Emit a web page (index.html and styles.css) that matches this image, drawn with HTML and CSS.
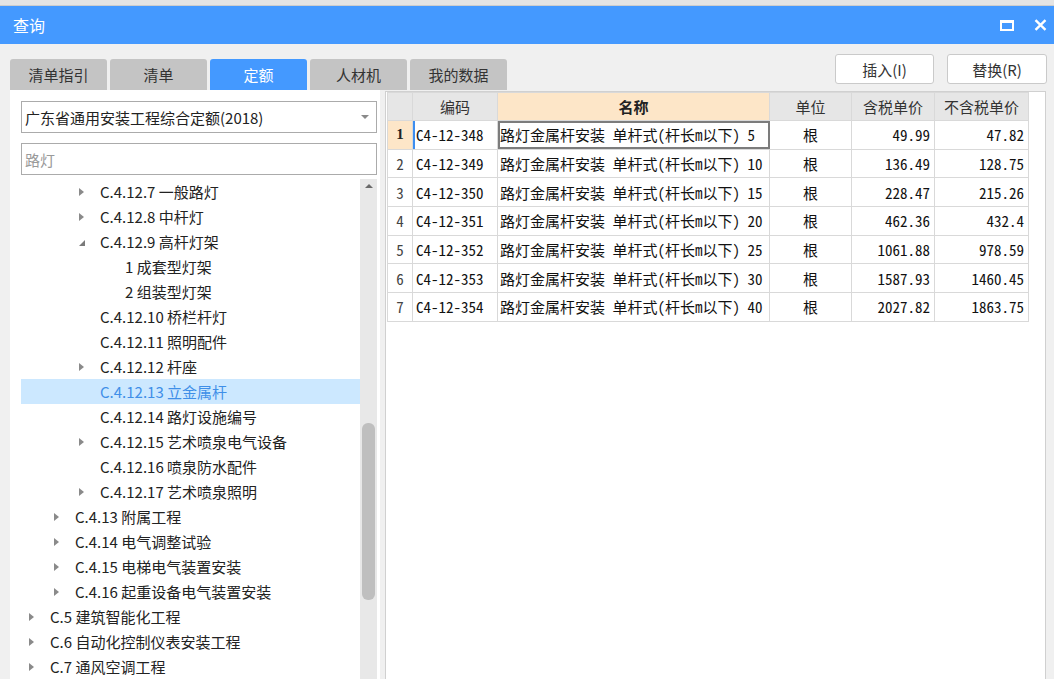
FILE: index.html
```html
<!DOCTYPE html>
<html lang="zh-CN">
<head>
<meta charset="utf-8">
<title>查询</title>
<link rel="stylesheet" href="styles.css">
</head>
<body>
<div class="topstrip"></div>
<div class="titlebar">
  <div class="title">查询</div>
  <div class="winbtns">
    <svg class="wmax" width="14" height="11" viewBox="0 0 14 11"><rect x="1" y="1.5" width="12" height="8.5" fill="none" stroke="#fff" stroke-width="2"/><rect x="0" y="0" width="14" height="3" fill="#fff"/></svg>
    <svg class="wclose" width="13" height="12" viewBox="0 0 13 12"><path d="M1.5 1.2 L11.5 10.8 M11.5 1.2 L1.5 10.8" stroke="#fff" stroke-width="2.4" fill="none"/></svg>
  </div>
</div>
<div class="toolbar">
  <div class="tabs">
    <div class="tab">清单指引</div>
    <div class="tab">清单</div>
    <div class="tab active">定额</div>
    <div class="tab">人材机</div>
    <div class="tab">我的数据</div>
  </div>
  <div class="actions">
    <div class="btn">插入(I)</div>
    <div class="btn wide">替换(R)</div>
  </div>
</div>
<div class="content">
  <div class="left">
    <div class="select"><span class="seltext">广东省通用安装工程综合定额(2018)</span><span class="caret"></span></div>
    <div class="search">路灯</div>
    <div class="treewrap">
      <div class="tree">
        <div class="node l3"><span class="tw"><i class="arr"></i></span>C.4.12.7 一般路灯</div>
        <div class="node l3"><span class="tw"><i class="arr"></i></span>C.4.12.8 中杆灯</div>
        <div class="node l3"><span class="tw"><i class="open"></i></span>C.4.12.9 高杆灯架</div>
        <div class="node l4"><span class="tw"></span>1 成套型灯架</div>
        <div class="node l4"><span class="tw"></span>2 组装型灯架</div>
        <div class="node l3"><span class="tw"></span>C.4.12.10 桥栏杆灯</div>
        <div class="node l3"><span class="tw"></span>C.4.12.11 照明配件</div>
        <div class="node l3"><span class="tw"><i class="arr"></i></span>C.4.12.12 杆座</div>
        <div class="node l3 sel"><span class="tw"></span>C.4.12.13 立金属杆</div>
        <div class="node l3"><span class="tw"></span>C.4.12.14 路灯设施编号</div>
        <div class="node l3"><span class="tw"><i class="arr"></i></span>C.4.12.15 艺术喷泉电气设备</div>
        <div class="node l3"><span class="tw"></span>C.4.12.16 喷泉防水配件</div>
        <div class="node l3"><span class="tw"><i class="arr"></i></span>C.4.12.17 艺术喷泉照明</div>
        <div class="node l2"><span class="tw"><i class="arr"></i></span>C.4.13 附属工程</div>
        <div class="node l2"><span class="tw"><i class="arr"></i></span>C.4.14 电气调整试验</div>
        <div class="node l2"><span class="tw"><i class="arr"></i></span>C.4.15 电梯电气装置安装</div>
        <div class="node l2"><span class="tw"><i class="arr"></i></span>C.4.16 起重设备电气装置安装</div>
        <div class="node l1"><span class="tw"><i class="arr"></i></span>C.5 建筑智能化工程</div>
        <div class="node l1"><span class="tw"><i class="arr"></i></span>C.6 自动化控制仪表安装工程</div>
        <div class="node l1"><span class="tw"><i class="arr"></i></span>C.7 通风空调工程</div>
      </div>
      <div class="vscroll">
        <div class="up"></div>
        <div class="thumb"></div>
      </div>
    </div>
  </div>
  <div class="right">
    <table class="grid">
      <colgroup>
        <col class="c-no"><col class="c-code"><col class="c-name"><col class="c-unit"><col class="c-p1"><col class="c-p2">
      </colgroup>
      <thead>
        <tr><th class="corner"></th><th>编码</th><th class="hname">名称</th><th>单位</th><th>含税单价</th><th>不含税单价</th></tr>
      </thead>
      <tbody>
        <tr class="cur"><td class="no">1</td><td class="code">C4-12-348</td><td class="name focus">路灯金属杆安装 单杆式(杆长m以下) 5</td><td class="unit">根</td><td class="num">49.99</td><td class="num">47.82</td></tr>
        <tr><td class="no">2</td><td class="code">C4-12-349</td><td class="name">路灯金属杆安装 单杆式(杆长m以下) 10</td><td class="unit">根</td><td class="num">136.49</td><td class="num">128.75</td></tr>
        <tr><td class="no">3</td><td class="code">C4-12-350</td><td class="name">路灯金属杆安装 单杆式(杆长m以下) 15</td><td class="unit">根</td><td class="num">228.47</td><td class="num">215.26</td></tr>
        <tr><td class="no">4</td><td class="code">C4-12-351</td><td class="name">路灯金属杆安装 单杆式(杆长m以下) 20</td><td class="unit">根</td><td class="num">462.36</td><td class="num">432.4</td></tr>
        <tr><td class="no">5</td><td class="code">C4-12-352</td><td class="name">路灯金属杆安装 单杆式(杆长m以下) 25</td><td class="unit">根</td><td class="num">1061.88</td><td class="num">978.59</td></tr>
        <tr><td class="no">6</td><td class="code">C4-12-353</td><td class="name">路灯金属杆安装 单杆式(杆长m以下) 30</td><td class="unit">根</td><td class="num">1587.93</td><td class="num">1460.45</td></tr>
        <tr><td class="no">7</td><td class="code">C4-12-354</td><td class="name">路灯金属杆安装 单杆式(杆长m以下) 40</td><td class="unit">根</td><td class="num">2027.82</td><td class="num">1863.75</td></tr>
      </tbody>
    </table>
  </div>
</div>
</body>
</html>
```
FILE: styles.css
```css
* { box-sizing: border-box; }
html, body { margin: 0; padding: 0; }
body {
  width: 1054px;
  height: 679px;
  overflow: hidden;
  background: #f0f0f0;
  font-family: "Noto Sans CJK SC", "Noto Sans", sans-serif;
  color: #222;
}
.topstrip {
  height: 6px;
  background: #e4e4e4;
  border-bottom: 1px solid #cdcdcd;
}
.titlebar {
  height: 38px;
  background: #4499ff;
  display: flex;
  align-items: center;
  padding: 0 7px 0 13px;
  color: #fff;
  font-size: 16px;
}
.title { flex: 1; }
.winbtns { display: flex; align-items: center; }
.wmax { display: block; margin-right: 20px; }
.wclose { display: block; }

.toolbar {
  height: 46px;
  display: flex;
  padding: 0 7px 0 10px;
}
.tabs {
  display: flex;
  gap: 3px;
  align-self: flex-end;
}
.tab {
  width: 97px;
  height: 31px;
  background: #c4c4c4;
  border-radius: 3px 3px 0 0;
  display: flex;
  align-items: center;
  justify-content: center;
  font-size: 15px;
  color: #333;
}
.tab.active { background: #4499ff; color: #fff; }
.actions {
  margin-left: auto;
  display: flex;
  gap: 13px;
  padding-top: 10px;
}
.btn {
  width: 99px;
  height: 30px;
  background: #fff;
  border: 1px solid #cacaca;
  border-radius: 3px;
  display: flex;
  align-items: center;
  justify-content: center;
  font-size: 15px;
  color: #333;
}
.btn.wide { width: 100px; }

.content {
  display: flex;
  height: 589px;
}
.left {
  width: 370px;
  margin-left: 10px;
  background: #fff;
  padding: 11px 3px 0 11px;
  display: flex;
  flex-direction: column;
}
.select {
  height: 32px;
  border: 1px solid #ababab;
  display: flex;
  align-items: center;
  padding: 0 7px 0 3px;
  font-size: 15px;
  color: #222;
}
.seltext { flex: 1; }
.caret {
  width: 0; height: 0;
  border-left: 4px solid transparent;
  border-right: 4px solid transparent;
  border-top: 4px solid #8a8a8a;
}
.search {
  margin-top: 10px;
  height: 32px;
  border: 1px solid #ababab;
  display: flex;
  align-items: center;
  padding-left: 3px;
  font-size: 15px;
  color: #9a9a9a;
}
.treewrap {
  margin-top: 4px;
  flex: 1;
  display: flex;
  min-height: 0;
}
.tree { flex: 1; }
.node {
  height: 25px;
  display: flex;
  align-items: center;
  font-size: 15px;
  color: #222;
  white-space: nowrap;
}
.node.l1 { padding-left: 4px; }
.node.l2 { padding-left: 29px; }
.node.l3 { padding-left: 54px; }
.node.l4 { padding-left: 79px; }
.node.sel { background: #cce8ff; color: #3f8fe8; }
.tw {
  width: 25px;
  height: 25px;
  display: flex;
  align-items: center;
  padding-left: 4px;
}
.arr {
  width: 0; height: 0;
  border-left: 5px solid #8a8a8a;
  border-top: 4px solid transparent;
  border-bottom: 4px solid transparent;
}
.open {
  width: 0; height: 0;
  margin-top: 2px;
  border-bottom: 6px solid #7a7a7a;
  border-left: 6px solid transparent;
}
.vscroll {
  width: 17px;
  background: #e8e8e8;
  position: relative;
}
.up {
  margin: 5px auto 0;
  width: 0; height: 0;
  border-left: 4px solid transparent;
  border-right: 4px solid transparent;
  border-bottom: 4px solid #6a6a6a;
}
.thumb {
  position: absolute;
  left: 2px;
  top: 244px;
  width: 13px;
  height: 177px;
  background: #bfbfbf;
  border-radius: 6px;
}

.right {
  width: 661px;
  margin-left: 5px;
  margin-top: 1px;
  background: #fff;
  border: 1px solid #d0d0d0;
  border-bottom: none;
  padding-left: 1px;
}
.grid {
  border-collapse: collapse;
  table-layout: fixed;
  width: 641px;
}
.c-no { width: 25px; }
.c-code { width: 85px; }
.c-name { width: 272px; }
.c-unit { width: 82px; }
.c-p1 { width: 83px; }
.c-p2 { width: 94px; }
.grid th, .grid td {
  border: 1px solid #d9d9d9;
  padding: 0;
  white-space: nowrap;
  overflow: hidden;
}
.grid th {
  height: 28px;
  background: #e6e6e6;
  font-weight: normal;
  font-size: 15px;
  color: #333;
}
.grid th.hname { background: #fde6c8; font-weight: bold; color: #222; }
.grid td {
  height: 28.7px;
  font-family: "Noto Sans Mono CJK SC", "Noto Sans CJK SC", "Liberation Mono", monospace;
  font-size: 15px;
  color: #111;
}
.grid td.no { text-align: center; color: #444; background: #fff; }
.grid tr.cur td.no { background: #fde6c8; font-weight: bold; color: #222; font-family: "Liberation Serif", serif; }
.grid tr.cur td.code { box-shadow: inset 2px 0 0 #3d8ef0; }
.grid td.code { padding-left: 3px; }
.grid td.name { padding-left: 2px; }
.grid td.focus { outline: 2px solid #7c7c7c; outline-offset: -2px; }
.grid td.unit { text-align: center; }
.grid td.num { text-align: right; padding-right: 4px; }
```
